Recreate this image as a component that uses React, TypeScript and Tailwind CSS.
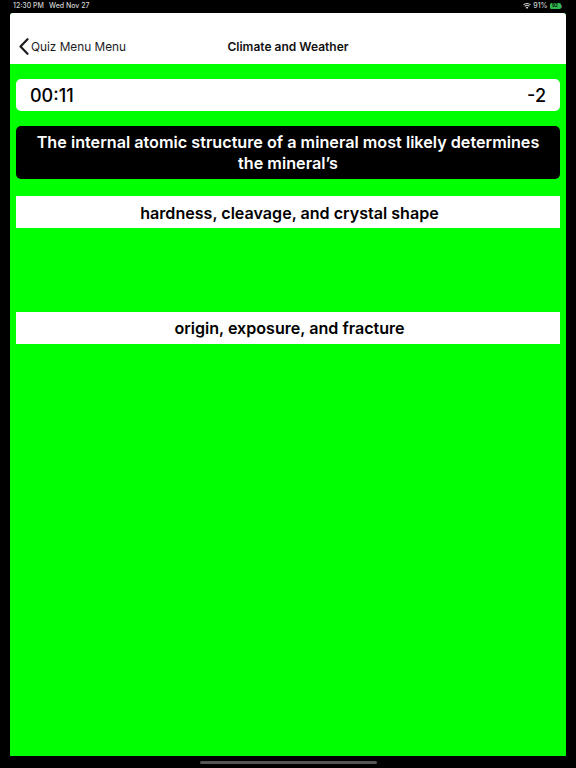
export default function App() {
  return (
    <div className="flex h-[768px] w-[576px] flex-col overflow-hidden bg-black font-['Inter',sans-serif]">
      {/* Status bar */}
      <div className="flex h-[13px] items-center justify-between pb-[1px] pl-[13px] pr-[14px] text-[7px] font-medium text-[#d0d0d0]">
        <div className="flex gap-[5px]">
          <span>12:30 PM</span>
          <span>Wed Nov 27</span>
        </div>
        <div className="flex items-center gap-[2px]">
          <svg width="8" height="6" viewBox="0 0 18 14" fill="#d0d0d0">
            <path d="M9 14 5.8 10.4a4.6 4.6 0 0 1 6.4 0ZM4.3 8.7 2.6 6.9a9.2 9.2 0 0 1 12.8 0l-1.7 1.8a6.8 6.8 0 0 0-9.4 0ZM1.2 5.3 0 3.6a13 13 0 0 1 18 0l-1.2 1.7a11 11 0 0 0-15.6 0Z" />
          </svg>
          <span>91%</span>
          <div className="flex items-center">
            <div className="flex h-[6px] w-[11px] items-center justify-center rounded-[1.5px] bg-[#2fb84f] text-[4.5px] font-bold leading-none text-black">
              92
            </div>
            <div className="ml-[0.5px] h-[3px] w-[1px] rounded-r-sm bg-[#666]" />
          </div>
        </div>
      </div>

      <div className="mx-[10px] flex h-[743px] flex-col overflow-hidden rounded-t-[3px] bg-[#00ff00]">
        {/* Nav bar */}
        <div className="relative flex h-[51px] shrink-0 items-end bg-white pb-[7px]">
          <div className="flex items-center pl-[9px] text-[#1c1c1e]">
            <svg width="10" height="17" viewBox="0 0 10 17" fill="none" stroke="currentColor" strokeWidth="2.2" strokeLinecap="round" strokeLinejoin="round" className="mb-[1px]">
              <polyline points="8.5,1.2 1.5,8.5 8.5,15.8" />
            </svg>
            <span className="ml-[2px] text-[11.8px] leading-[20px]">Quiz Menu Menu</span>
          </div>
          <span className="absolute inset-x-0 bottom-[7px] text-center text-[12px] font-semibold leading-[20px] text-[#111]">
            Climate and Weather
          </span>
        </div>

        <div className="flex flex-col px-[6px] pt-[15px]">
          {/* Timer */}
          <div className="flex h-[32px] items-center justify-between rounded-[5px] bg-white px-[14px] text-[18px] font-medium text-black">
            <span>00:11</span>
            <span>-2</span>
          </div>

          {/* Question */}
          <div className="mt-[15px] flex h-[53px] items-center justify-center rounded-[5px] bg-black px-[8px] pt-[1px] text-center text-[16.2px] font-semibold leading-[21px] text-white">
            The internal atomic structure of a mineral most likely determines the mineral’s
          </div>

          {/* Answers */}
          <div className="mt-[17px] flex h-[32px] items-center justify-center bg-white pl-[3px] pt-[2px] text-[16.1px] font-semibold text-black">
            hardness, cleavage, and crystal shape
          </div>
          <div className="mt-[84px] flex h-[32px] items-center justify-center bg-white pl-[3px] pt-[1px] text-[16.1px] font-semibold text-black">
            origin, exposure, and fracture
          </div>
        </div>
      </div>

      {/* Home indicator */}
      <div className="flex flex-1 items-center justify-center">
        <div className="h-[3px] w-[177px] rounded-full bg-[#555]" />
      </div>
    </div>
  );
}
